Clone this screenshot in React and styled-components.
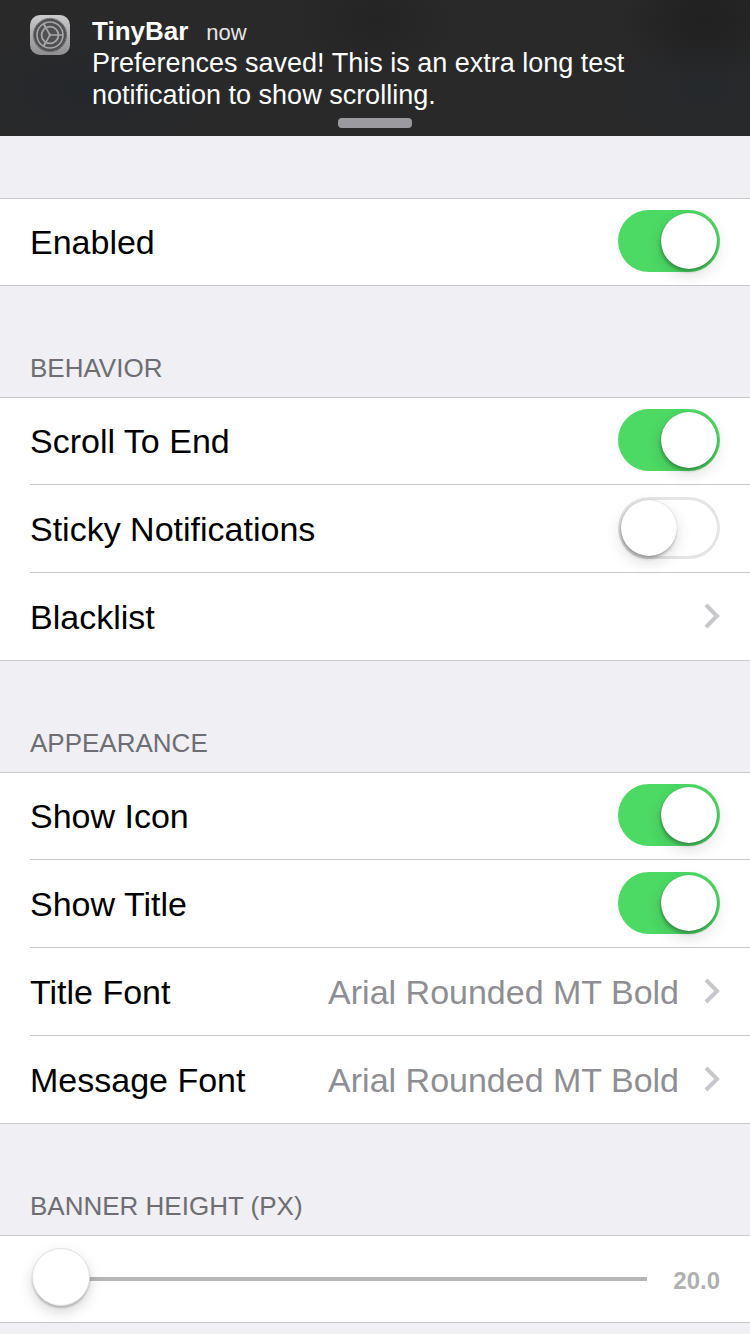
import React, { useState } from "react";
import styled, { createGlobalStyle, css } from "styled-components";

const line = "#c8c7cc";

const GlobalStyle = createGlobalStyle`
  * { box-sizing: border-box; }
  body {
    margin: 0;
    background: #efeff4;
    color: #000;
    font-family: "Liberation Sans", Arial, sans-serif;
    font-size: 34px;
  }
  button, input { font: inherit; color: inherit; }
`;

const Banner = styled.header`
  display: grid;
  grid-template-columns: 40px 1fr;
  column-gap: 22px;
  padding: 15px 30px 8px;
  color: #fff;
  font-size: 26px;
  line-height: 32px;
  background:
    radial-gradient(ellipse 90px 60px at 94% 15%, #202020, transparent),
    radial-gradient(ellipse 90px 60px at 94% 66%, #25282b, transparent),
    radial-gradient(ellipse 130px 60px at 12% 66%, #24272b, transparent),
    radial-gradient(ellipse 90px 60px at 50% 15%, #242425, transparent),
    #29292a;
`;

const BannerText = styled.div`
  min-width: 0;
`;

const BannerHeading = styled.div`
  display: flex;
  align-items: baseline;
  gap: 18px;
  height: 32px;
`;

const BannerTitle = styled.strong`
  font-weight: 700;
`;

const BannerTime = styled.time`
  font-size: 22px;
  color: #e6e6e6;
`;

const BannerMessage = styled.p`
  margin: 0;
  max-width: 560px;
  font-size: 27px;
`;

const Grabber = styled.button`
  grid-column: 1 / -1;
  justify-self: center;
  width: 74px;
  height: 10px;
  margin-top: 7px;
  padding: 0;
  border: 0;
  border-radius: 4px;
  background: #9b9a9f;
`;

const AppIcon = styled.svg`
  width: 40px;
  height: 40px;
`;

const Preferences = styled.main`
  padding-bottom: 60px;
`;

const Section = styled.section`
  padding-top: ${(p) => (p.$untitled ? "62px" : "66px")};
`;

const SectionTitle = styled.h2`
  display: block;
  margin: 0;
  padding: 0 30px 13px;
  font-size: 26px;
  font-weight: 400;
  line-height: 32px;
  color: #6d6d72;
  text-transform: uppercase;
`;

const Group = styled.div`
  background: #fff;
  box-shadow: inset 0 1px ${line};
`;

const rowStyle = css`
  display: flex;
  align-items: center;
  min-height: 88px;
  margin-left: 30px;
  padding: 12px 30px 13px 0;
  border-bottom: 1px solid ${line};
  color: #000;
  line-height: 40px;
  text-decoration: none;

  &:last-child {
    margin-left: 0;
    padding-left: 30px;
  }
`;

const Row = styled.div`
  ${rowStyle}
`;

const SwitchRow = styled.label`
  ${rowStyle}
`;

const LinkRow = styled.a`
  ${rowStyle}
`;

const RowLabel = styled.span`
  flex: 1;
  padding-top: 2px;
`;

const RowValue = styled.span`
  padding-top: 2px;
  color: #8e8e93;
`;

const Chevron = styled.svg`
  width: 16px;
  height: 26px;
  margin-left: 25px;
  fill: none;
  stroke: #c7c7cc;
  stroke-width: 4;
`;

const Toggle = styled.input`
  appearance: none;
  display: flex;
  width: 102px;
  height: 62px;
  margin: 0;
  padding: 3px;
  border-radius: 31px;
  background: #fff;
  box-shadow: inset 0 0 0 3px #e5e5e5;

  &::before {
    content: "";
    width: 56px;
    height: 56px;
    border-radius: 50%;
    background: #fff;
    box-shadow: 0 0 1px rgba(0, 0, 0, 0.3), -1px 3px 3px rgba(0, 0, 0, 0.22),
      0 6px 16px rgba(0, 0, 0, 0.14);
  }

  &:checked {
    justify-content: flex-end;
    background: #4cd964;
    box-shadow: none;
  }
`;

const Slider = styled.input`
  appearance: none;
  flex: 1;
  min-width: 0;
  height: 58px;
  margin: 0 0 2px 2px;
  border-radius: 2px;
  background: linear-gradient(#b6b6b6, #b6b6b6) 4px 29px / 100% 4px no-repeat;

  &::-webkit-slider-thumb {
    appearance: none;
    width: 58px;
    height: 58px;
    border: 1px solid #e2e2e2;
    border-radius: 50%;
    background: #fff;
    box-shadow: 0 2px 2px rgba(0, 0, 0, 0.2), 0 6px 14px rgba(0, 0, 0, 0.16);
  }
`;

const SliderValue = styled.output`
  margin-left: 26px;
  padding-top: 6px;
  font-size: 24px;
  font-weight: 700;
  color: #b0b0b0;
`;

function SettingsIcon() {
  return (
    <AppIcon viewBox="0 0 40 40" aria-hidden="true">
      <defs>
        <linearGradient id="plate" x1="0" y1="0" x2="0" y2="1">
          <stop offset="0" stopColor="#cbcbcc" />
          <stop offset="1" stopColor="#8e8e91" />
        </linearGradient>
      </defs>
      <rect width="40" height="40" rx="10" fill="url(#plate)" />
      <circle cx="20" cy="20" r="16.6" fill="none" stroke="#505052" strokeDasharray="1.2 .5" />
      <circle cx="20" cy="20" r="16.2" fill="#505052" />
      <g fill="none" stroke="#a6a6a8">
        <circle cx="20" cy="20" r="13" strokeWidth="1.6" />
        <circle cx="20" cy="20" r="8.4" strokeWidth="1.8" />
        <path d="M20 20H33M20 20L15.8 12.7M20 20L15.8 27.3" strokeWidth="1.6" />
        <path d="M15.8 12.7L13.5 8.7M15.8 27.3L13.5 31.3" strokeWidth="2" />
      </g>
      <circle cx="20" cy="20" r="1.4" fill="#a6a6a8" />
    </AppIcon>
  );
}

function Disclosure() {
  return (
    <Chevron viewBox="0 0 16 26" aria-hidden="true">
      <path d="M2 2L13 13L2 24" />
    </Chevron>
  );
}

function SwitchCell({ label, on = false }) {
  return (
    <SwitchRow>
      <RowLabel>{label}</RowLabel>
      <Toggle type="checkbox" role="switch" defaultChecked={on} />
    </SwitchRow>
  );
}

function LinkCell({ label, value, href }) {
  return (
    <LinkRow href={href}>
      <RowLabel>{label}</RowLabel>
      {value && <RowValue>{value}</RowValue>}
      <Disclosure />
    </LinkRow>
  );
}

export default function App() {
  const [height, setHeight] = useState(20);

  return (
    <>
      <GlobalStyle />
      <Banner>
        <SettingsIcon />
        <BannerText>
          <BannerHeading>
            <BannerTitle>TinyBar</BannerTitle>
            <BannerTime>now</BannerTime>
          </BannerHeading>
          <BannerMessage>
            Preferences saved! This is an extra long test notification to show scrolling.
          </BannerMessage>
        </BannerText>
        <Grabber type="button" aria-label="Expand notification" />
      </Banner>
      <Preferences>
        <Section $untitled>
          <Group>
            <SwitchCell label="Enabled" on />
          </Group>
        </Section>
        <Section>
          <SectionTitle>Behavior</SectionTitle>
          <Group>
            <SwitchCell label="Scroll To End" on />
            <SwitchCell label="Sticky Notifications" />
            <LinkCell label="Blacklist" href="#blacklist" />
          </Group>
        </Section>
        <Section>
          <SectionTitle>Appearance</SectionTitle>
          <Group>
            <SwitchCell label="Show Icon" on />
            <SwitchCell label="Show Title" on />
            <LinkCell label="Title Font" value="Arial Rounded MT Bold" href="#title-font" />
            <LinkCell label="Message Font" value="Arial Rounded MT Bold" href="#message-font" />
          </Group>
        </Section>
        <Section>
          <SectionTitle as="label" htmlFor="banner-height">
            Banner Height (px)
          </SectionTitle>
          <Group>
            <Row>
              <Slider
                id="banner-height"
                type="range"
                min="20"
                max="100"
                value={height}
                onChange={(e) => setHeight(Number(e.target.value))}
              />
              <SliderValue htmlFor="banner-height">{height.toFixed(1)}</SliderValue>
            </Row>
          </Group>
        </Section>
      </Preferences>
    </>
  );
}
